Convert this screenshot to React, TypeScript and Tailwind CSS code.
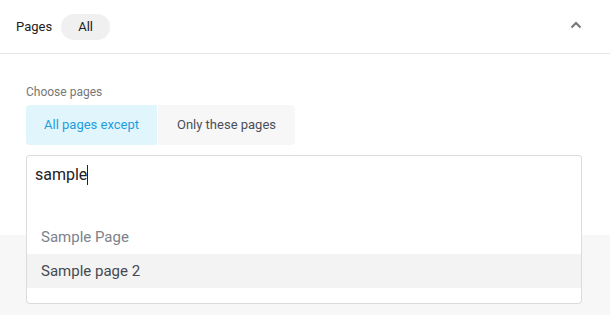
import React from 'react';

const App = () => {
  return (
    <div className="w-[610px] h-[315px] bg-[#f7f7f7] overflow-hidden font-['Roboto',sans-serif]">
      {/* Panel */}
      <div className="bg-white">
        {/* Header */}
        <div className="h-[54px] flex items-center justify-between pl-4 pr-[28px] border-b border-[#e6e6e6]">
          <div className="flex items-center gap-[9px]">
            <span className="text-[13px] text-[#222]">Pages</span>
            <span className="h-[26px] w-[49px] rounded-full bg-[#f0f0f0] flex items-center justify-center text-[13px] text-[#222]">
              All
            </span>
          </div>
          <svg width="12" height="8" viewBox="0 0 12 8" className="mt-[-4px]">
            <path d="M1.5 6.5 L6 2 L10.5 6.5" fill="none" stroke="#7a7a7a" strokeWidth="2.2" />
          </svg>
        </div>

        {/* Body */}
        <div className="pt-[31px] pb-[32px] pl-[26px] pr-[28px]">
          <div className="text-[12px] leading-[14px] text-[#777]">Choose pages</div>
          <div className="mt-[6px] flex w-max h-[40px] rounded-[4px] overflow-hidden">
            <button className="h-full w-[132px] bg-[#e1f5fd] text-[13px] text-[#1f9ddd] border-r border-white">
              All pages except
            </button>
            <button className="h-full w-[137px] bg-[#f7f7f7] text-[13px] text-[#4a4f57]">
              Only these pages
            </button>
          </div>

          {/* Search */}
          <div className="relative mt-[10px]">
            <div className="h-[48px] border border-b-0 border-[#dcdcdc] rounded-t-[4px] pl-2 pt-[7px] text-[16px] leading-[24px] text-[#222] flex items-start">
              <span>sample</span>
              <span className="inline-block w-px h-[20px] bg-[#222] mt-[2px]" />
            </div>
            <div className="absolute left-0 right-0 top-[48px] bg-white border border-t-0 border-[#dcdcdc] rounded-b-[4px] pt-[17px] pb-[15px]">
              <div className="h-[34px] flex items-center pl-[14px] text-[15px] text-[#7c828b]">Sample Page</div>
              <div className="h-[34px] flex items-center pl-[14px] text-[15px] text-[#434952] bg-[#f3f3f3]">Sample page 2</div>
            </div>
          </div>
        </div>
      </div>
    </div>
  );
};

export default App;
